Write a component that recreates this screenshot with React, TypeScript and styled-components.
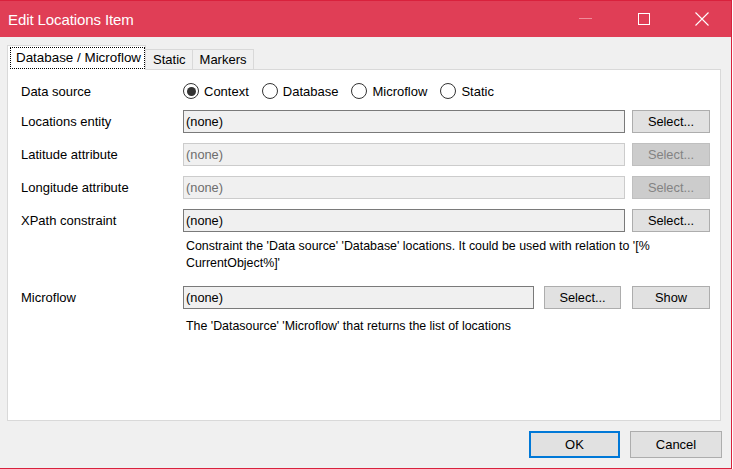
import React from "react";
import styled, { createGlobalStyle, css } from "styled-components";

const Global = createGlobalStyle`
  html, body { margin: 0; padding: 0; background: #ffffff; }
  body { font-family: "Liberation Sans", Arial, sans-serif; }
  * { box-sizing: border-box; }
`;

const Window = styled.div`
  width: 732px;
  height: 469px;
  display: flex;
  flex-direction: column;
  border-top: 1px solid #d9213c;
  border-right: 1px solid #d9213c;
  border-bottom: 1px solid #d9213c;
  background: #f0f0f0;
`;

const TitleBar = styled.div`
  height: 36px;
  flex: none;
  display: flex;
  align-items: center;
  background: #e03e56;
  color: #ffffff;
`;

const Title = styled.div`
  flex: 1;
  padding-left: 8px;
  font-size: 15px;
  letter-spacing: -0.1px;
`;

const Caption = styled.div`
  width: 58px;
  height: 36px;
  display: flex;
  align-items: center;
  justify-content: center;
`;

const Body = styled.div`
  flex: 1;
  display: flex;
  flex-direction: column;
  padding: 8px 10px 10px 7px;
`;

const TabStrip = styled.div`
  display: flex;
  align-items: flex-end;
  height: 24px;
  position: relative;
  z-index: 1;
`;

const Tab = styled.div<{ $active?: boolean }>`
  font-size: 13px;
  color: #000;
  border: 1px solid #d9d9d9;
  border-bottom: none;
  display: flex;
  align-items: center;
  ${(p) =>
    p.$active
      ? css`
          height: 25px;
          margin-bottom: -1px;
          background: #ffffff;
          padding: 0 1px 0 3px;
          font-size: 13.4px;
        `
      : css`
          height: 20px;
          background: #f0f0f0;
          padding: 0 6px 0 7px;
          border-left: none;
        `}
`;

const Focus = styled.span`
  outline: 1px dotted #000;
  padding: 2px 3px 2px 5px;
  line-height: 16px;
`;

const Panel = styled.div`
  flex: 1;
  background: #ffffff;
  border: 1px solid #d9d9d9;
  padding: 10px 10px 0 13px;
  display: flex;
  flex-direction: column;
  font-size: 13px;
  color: #000;
`;

const Row = styled.div<{ $gap?: number; $h?: number }>`
  display: flex;
  align-items: center;
  height: ${(p) => p.$h ?? 23}px;
  margin-top: ${(p) => p.$gap ?? 0}px;
`;

const Label = styled.div`
  width: 162px;
  flex: none;
`;

const Field = styled.div<{ $disabled?: boolean; $w?: number }>`
  ${(p) => (p.$w ? css`width: ${p.$w}px; flex: none;` : css`flex: 1;`)}
  height: 23px;
  background: #f0f0f0;
  border: 1px solid ${(p) => (p.$disabled ? "#cccccc" : "#7a7a7a")};
  color: ${(p) => (p.$disabled ? "#6d6d6d" : "#000")};
  padding-left: 2px;
  display: flex;
  align-items: center;
  font-size: 12.8px;
`;

const Button = styled.div<{ $disabled?: boolean; $w?: number; $ml?: number }>`
  width: ${(p) => p.$w ?? 78}px;
  margin-left: ${(p) => p.$ml ?? 7}px;
  flex: none;
  height: 23px;
  display: flex;
  align-items: center;
  justify-content: center;
  font-size: 12.8px;
  background: ${(p) => (p.$disabled ? "#cccccc" : "#e1e1e1")};
  border: 1px solid ${(p) => (p.$disabled ? "#bfbfbf" : "#adadad")};
  color: ${(p) => (p.$disabled ? "#838383" : "#000")};
`;

const Radios = styled.div`
  display: flex;
  align-items: center;
  gap: 13px;
`;

const RadioOption = styled.label`
  display: flex;
  align-items: center;
  gap: 5px;
`;

const Circle = styled.span<{ $checked?: boolean }>`
  width: 16px;
  height: 16px;
  border-radius: 50%;
  border: 1px solid #333333;
  background: #fff;
  display: flex;
  align-items: center;
  justify-content: center;
  &::after {
    content: "";
    width: 9px;
    height: 9px;
    border-radius: 50%;
    background: ${(p) => (p.$checked ? "#333333" : "transparent")};
  }
`;

const Help = styled.div<{ $gap: number }>`
  margin-top: ${(p) => p.$gap}px;
  padding-left: 165px;
  padding-right: 20px;
  line-height: 17px;
  font-size: 12.4px;
`;

const Footer = styled.div`
  display: flex;
  justify-content: flex-end;
  gap: 10px;
  margin-top: 10px;
  margin-right: -1px;
`;

const DialogButton = styled.div<{ $primary?: boolean }>`
  width: ${(p) => (p.$primary ? 91 : 92)}px;
  height: 27px;
  display: flex;
  align-items: center;
  justify-content: center;
  font-size: 13px;
  background: #e1e1e1;
  border: ${(p) => (p.$primary ? "2px solid #0078d7" : "1px solid #adadad")};
`;

const options = [
  { label: "Context", checked: true },
  { label: "Database" },
  { label: "Microflow" },
  { label: "Static" },
];

export default function App() {
  return (
    <>
      <Global />
      <Window>
        <TitleBar>
          <Title>Edit Locations Item</Title>
          <Caption>
            <svg width="14" height="2" viewBox="0 0 14 2">
              <rect x="0" y="0" width="13" height="1" fill="#ef8c9b" />
            </svg>
          </Caption>
          <Caption>
            <svg width="12" height="12" viewBox="0 0 12 12">
              <rect x="0.5" y="0.5" width="11" height="11" fill="none" stroke="#fff" strokeWidth="1" />
            </svg>
          </Caption>
          <Caption>
            <svg width="14" height="14" viewBox="0 0 14 14">
              <path d="M0.5 0.5 L13.5 13.5 M13.5 0.5 L0.5 13.5" stroke="#fff" strokeWidth="1.1" />
            </svg>
          </Caption>
        </TitleBar>
        <Body>
          <TabStrip>
            <Tab $active>
              <Focus>Database / Microflow</Focus>
            </Tab>
            <Tab>Static</Tab>
            <Tab>Markers</Tab>
          </TabStrip>
          <Panel>
            <Row $h={22}>
              <Label>Data source</Label>
              <Radios>
                {options.map((o) => (
                  <RadioOption key={o.label}>
                    <Circle $checked={o.checked} />
                    {o.label}
                  </RadioOption>
                ))}
              </Radios>
            </Row>
            <Row $gap={8}>
              <Label>Locations entity</Label>
              <Field>(none)</Field>
              <Button>Select...</Button>
            </Row>
            <Row $gap={10}>
              <Label>Latitude attribute</Label>
              <Field $disabled>(none)</Field>
              <Button $disabled>Select...</Button>
            </Row>
            <Row $gap={10}>
              <Label>Longitude attribute</Label>
              <Field $disabled>(none)</Field>
              <Button $disabled>Select...</Button>
            </Row>
            <Row $gap={10}>
              <Label>XPath constraint</Label>
              <Field>(none)</Field>
              <Button>Select...</Button>
            </Row>
            <Help $gap={6}>
              Constraint the 'Data source' 'Database' locations. It could be used with relation to '[%
              CurrentObject%]'
            </Help>
            <Row $gap={14}>
              <Label>Microflow</Label>
              <Field $w={351}>(none)</Field>
              <Button $w={77} $ml={10}>Select...</Button>
              <Button $w={78} $ml={11}>Show</Button>
            </Row>
            <Help $gap={9}>The 'Datasource' 'Microflow' that returns the list of locations</Help>
          </Panel>
          <Footer>
            <DialogButton $primary>OK</DialogButton>
            <DialogButton>Cancel</DialogButton>
          </Footer>
        </Body>
      </Window>
    </>
  );
}
